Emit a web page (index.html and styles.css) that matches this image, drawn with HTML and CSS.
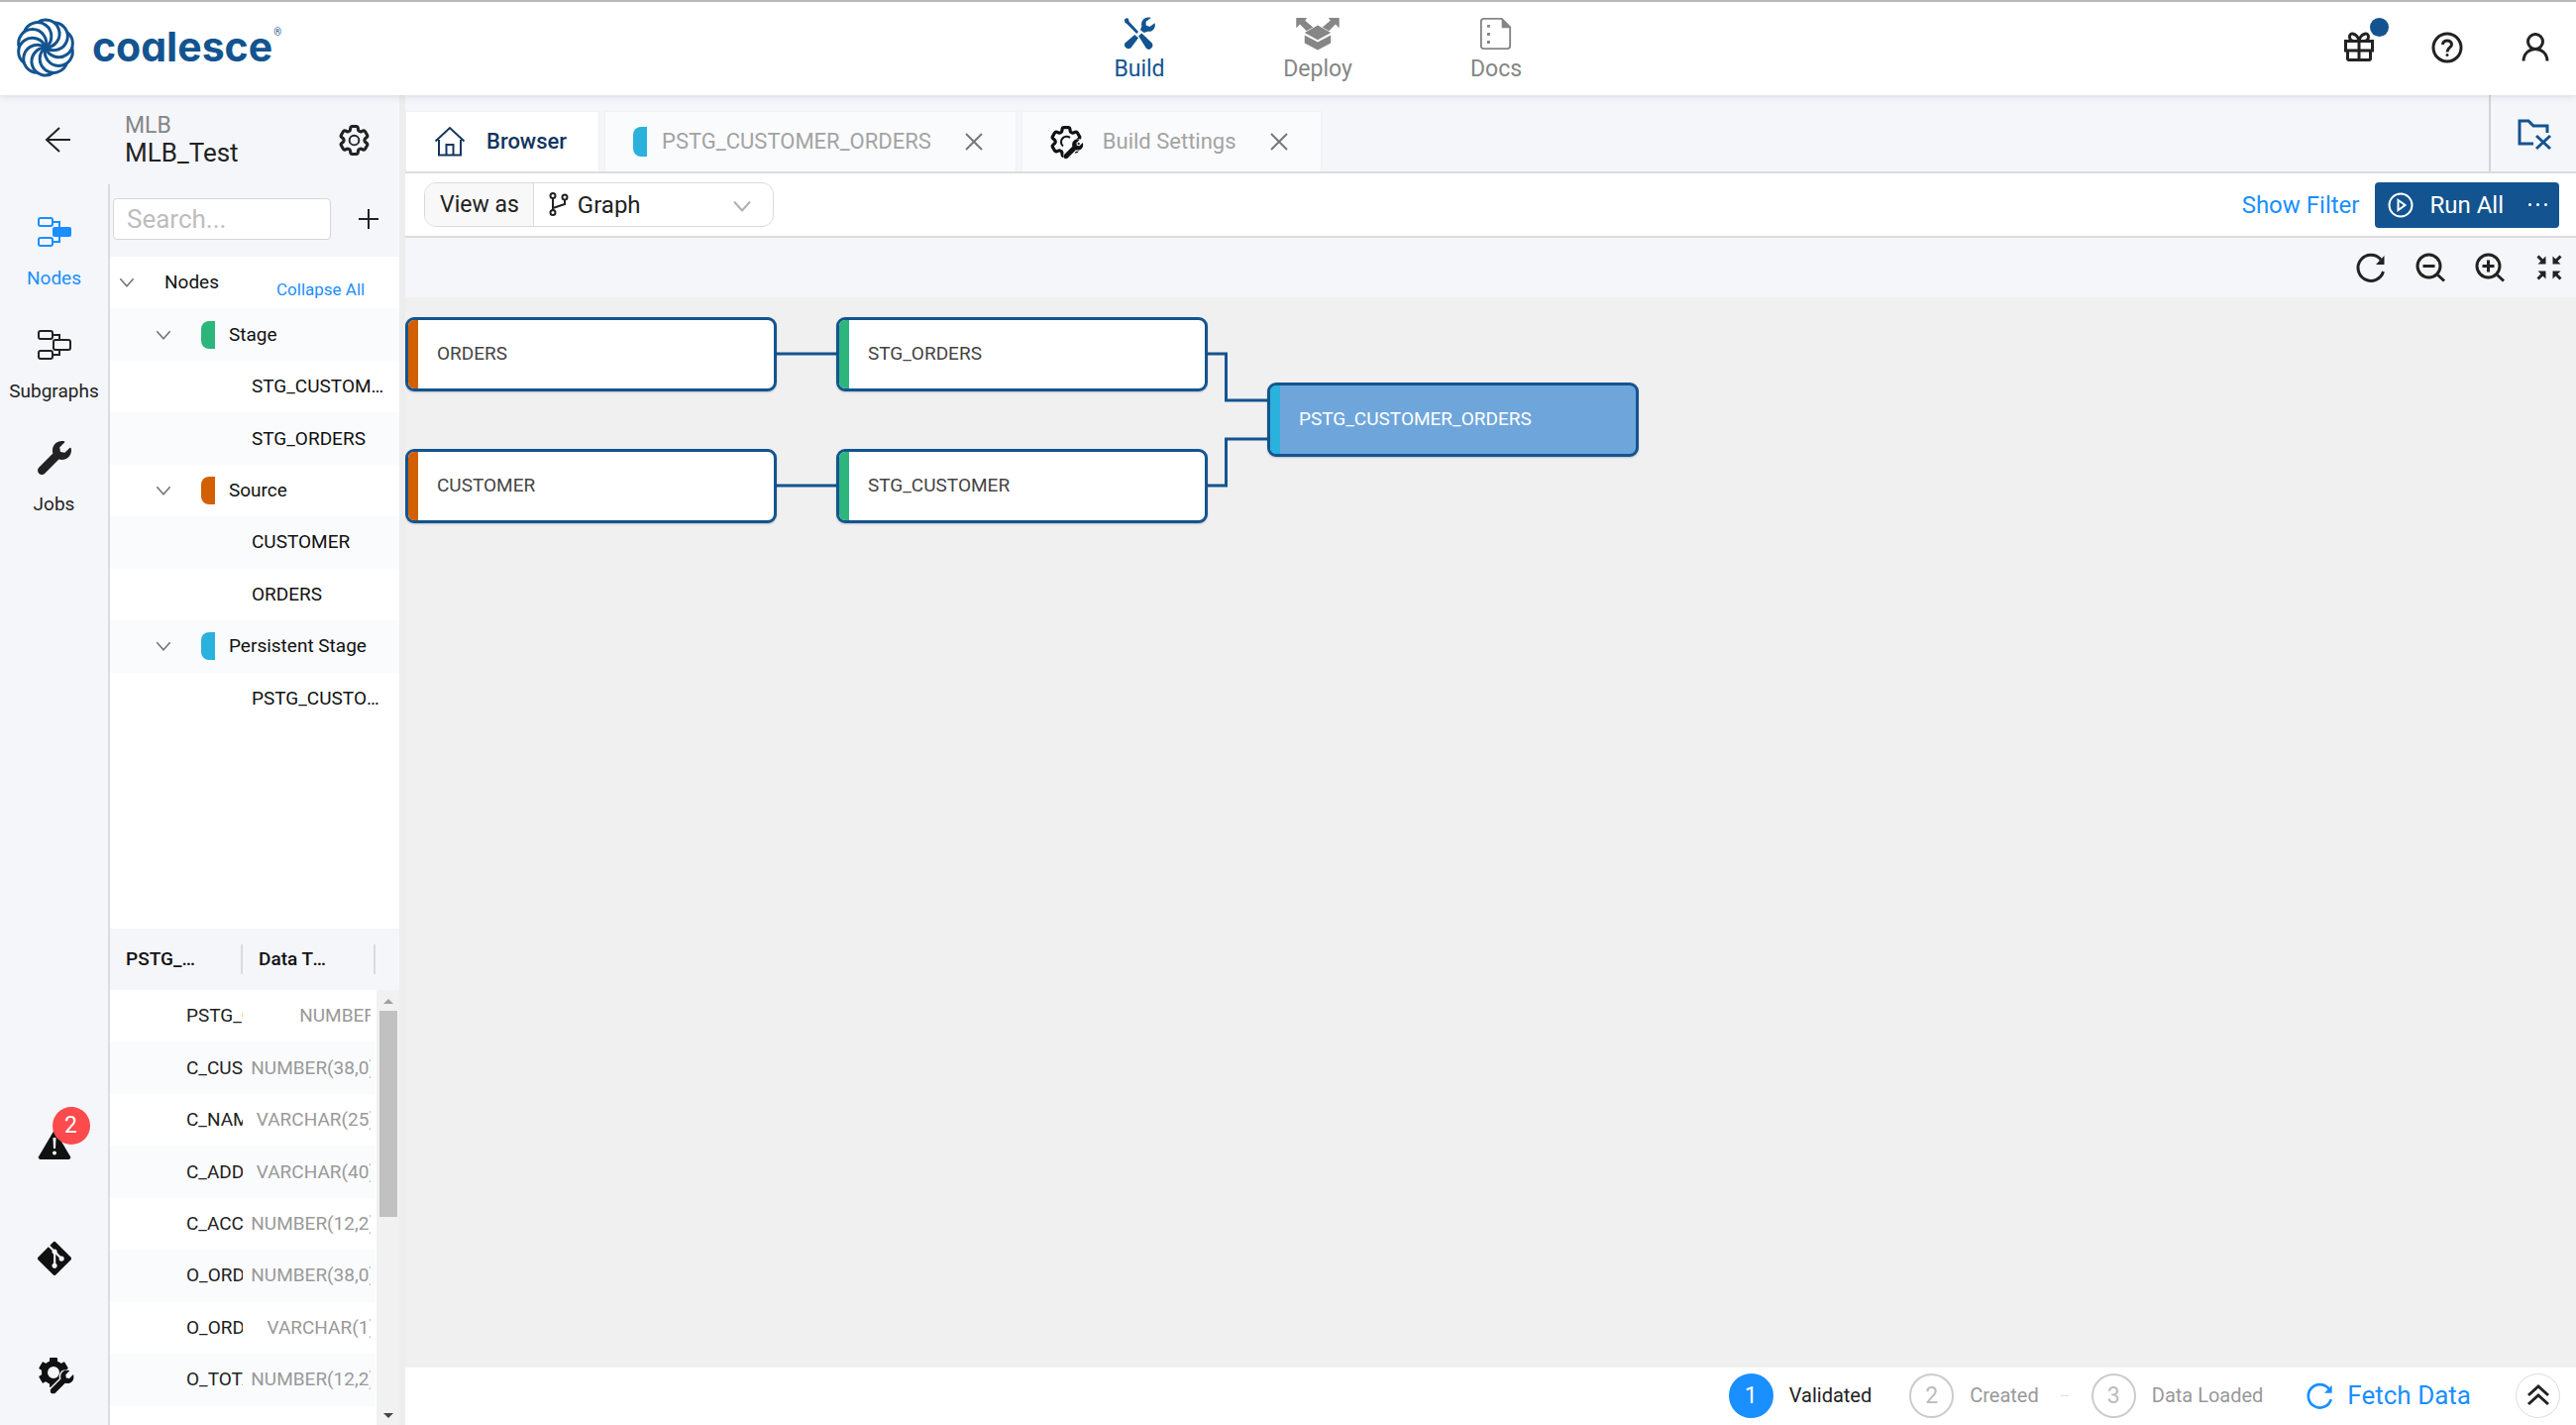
FILE: index.html
```html
<!DOCTYPE html>
<html lang="en">
<head>
<meta charset="utf-8">
<meta name="viewport" content="width=device-width, initial-scale=1">
<title>Coalesce - MLB_Test</title>
<link rel="stylesheet" href="styles.css">
</head>
<body>
<svg class="sprite" aria-hidden="true">
  <symbol id="chevron" viewBox="0 0 18 12"><path d="M1 1.500 9 10.500 17 1.500"/></symbol>
  <symbol id="close" viewBox="0 0 20 20"><path d="M2 2 18 18M18 2 2 18"/></symbol>
  <symbol id="gear" viewBox="2 2 20 20"><path d="M9.594 3.94c.09-.542.56-.94 1.11-.94h2.593c.55 0 1.02.398 1.11.94l.213 1.281c.063.374.313.686.645.87.074.04.147.083.22.127.325.196.72.257 1.075.124l1.217-.456a1.125 1.125 0 0 1 1.37.49l1.296 2.247a1.125 1.125 0 0 1-.26 1.431l-1.003.827c-.293.241-.438.613-.43.992a7.723 7.723 0 0 1 0 .255c-.008.378.137.75.43.991l1.004.827c.424.35.534.955.26 1.43l-1.298 2.247a1.125 1.125 0 0 1-1.369.491l-1.217-.456c-.355-.133-.75-.072-1.076.124a6.47 6.47 0 0 1-.22.128c-.331.183-.581.495-.644.869l-.213 1.281c-.09.543-.56.94-1.11.94h-2.594c-.55 0-1.019-.398-1.11-.94l-.213-1.281c-.062-.374-.312-.686-.644-.87a6.52 6.52 0 0 1-.22-.127c-.325-.196-.72-.257-1.076-.124l-1.217.456a1.125 1.125 0 0 1-1.369-.49l-1.297-2.247a1.125 1.125 0 0 1 .26-1.431l1.004-.827c.292-.24.437-.613.43-.991a6.932 6.932 0 0 1 0-.255c.007-.38-.138-.751-.43-.992l-1.004-.827a1.125 1.125 0 0 1-.26-1.43l1.297-2.247a1.125 1.125 0 0 1 1.37-.491l1.216.456c.356.133.751.072 1.076-.124.072-.044.146-.086.22-.128.332-.183.582-.495.644-.869l.214-1.28Z"/></symbol>
  <symbol id="wrench" viewBox="0 0 512 512"><path d="M507.73 109.1c-2.24-9.03-13.54-12.09-20.12-5.51l-74.36 74.36-67.88-11.31-11.31-67.88 74.36-74.36c6.62-6.62 3.43-17.9-5.66-20.16-47.38-11.74-99.55.91-136.58 37.93-39.64 39.64-50.55 97.1-34.05 147.2L18.74 402.76c-24.99 24.99-24.99 65.51 0 90.5 24.99 24.99 65.51 24.99 90.5 0l213.21-213.21c50.12 16.71 107.47 5.68 147.37-34.22 37.07-37.07 49.7-89.32 37.91-136.73z"/></symbol>
</svg>

<header class="topbar">
  <a class="brand" href="#" aria-label="Coalesce home">
    <svg class="brand-mark" viewBox="-30 -30 60 60" aria-hidden="true">
      <g class="line">
        <path d="M0 0A14 14 0 1 0 -8.2 -25.3"/>
        <path transform="rotate(36)" d="M0 0A14 14 0 1 0 -8.2 -25.3"/>
        <path transform="rotate(72)" d="M0 0A14 14 0 1 0 -8.2 -25.3"/>
        <path transform="rotate(108)" d="M0 0A14 14 0 1 0 -8.2 -25.3"/>
        <path transform="rotate(144)" d="M0 0A14 14 0 1 0 -8.2 -25.3"/>
        <path transform="rotate(180)" d="M0 0A14 14 0 1 0 -8.2 -25.3"/>
        <path transform="rotate(216)" d="M0 0A14 14 0 1 0 -8.2 -25.3"/>
        <path transform="rotate(252)" d="M0 0A14 14 0 1 0 -8.2 -25.3"/>
        <path transform="rotate(288)" d="M0 0A14 14 0 1 0 -8.2 -25.3"/>
        <path transform="rotate(324)" d="M0 0A14 14 0 1 0 -8.2 -25.3"/>
      </g>
    </svg>
    <span class="brand-name">coalesce</span><sup class="brand-reg">®</sup>
  </a>
  <nav class="main-nav" aria-label="Main">
    <a class="active" href="#build">
      <svg class="nav-icon" viewBox="0 0 36 36" aria-hidden="true">
        <path class="solid" d="M2 3 4.500 1 6.500 2.500 7 5 17 16 15 18 4.500 7.500 2.500 6z"/>
        <path class="solid" d="M17 20.500 20.500 17.500 31 27.500A4.300 4.300 0 0 1 25.500 34z"/>
        <path class="solid" d="M34.500 6.500 29 10.500 25 9 25 5 30.500 1C24 -1 19 4 20.500 10L19 14 23 17 27 15.500C32 16.500 36 11.500 34.500 6.500z"/>
        <path class="solid" d="M13 19 17 22.500 9 33A4.200 4.200 0 0 1 2.500 28z"/>
      </svg>Build</a>
    <a href="#deploy">
      <svg class="nav-icon wide" viewBox="0 0 46 36" aria-hidden="true">
        <path class="solid" d="M0 1H11.500L9.500 4 18 11 11 15 4 8 0 12zM46 1H34.500L36.500 4 28 11 35 15 42 8 46 12z"/>
        <path class="solid" d="M23 9 37 17 23 24.500 9 17zM9 19.500 23 27 37 19.500V28L23 35.500 9 28z"/>
      </svg>Deploy</a>
    <a href="#docs">
      <svg class="nav-icon" viewBox="0 0 36 36" aria-hidden="true">
        <path class="line" d="M5 2H24L33 11V31A3 3 0 0 1 30 34H5A3 3 0 0 1 2 31V5A3 3 0 0 1 5 2z"/>
        <path class="solid" d="M24 1 34 12H24zM8.500 8.500h3v3h-3zM8.500 17h3v3h-3zM8.500 25.500h3v3h-3z"/>
      </svg>Docs</a>
  </nav>
  <div class="top-actions">
    <button type="button" aria-label="What's new" class="has-dot">
      <svg viewBox="0 0 32 32" aria-hidden="true"><g class="line"><path d="M2.500 9.500h27v9.500h-27zM4.500 19V27a1.500 1.500 0 0 0 1.500 1.500h20a1.500 1.500 0 0 0 1.500-1.500V19M16 9.500V28.500M16 9C14 1 6 0 6.500 5.500 6.700 8 9 9.500 11 9.500M16 9C18 1 26 0 25.500 5.500 25.300 8 23 9.500 21 9.500"/></g></svg>
      <span class="dot"></span>
    </button>
    <button type="button" aria-label="Help">
      <svg viewBox="0 0 32 32" aria-hidden="true"><g class="line"><circle cx="16" cy="16" r="14"/><path d="M11.500 13C11.500 7.500 20.500 7.500 20.500 13 20.500 16 16 16 16 20.500"/></g><circle class="solid" cx="16" cy="23.500" r="1.500"/></svg>
    </button>
    <button type="button" aria-label="Account">
      <svg viewBox="0 0 32 32" aria-hidden="true"><g class="line"><circle cx="16" cy="10" r="7.500"/><path d="M4 29.500C4.500 13.500 27.500 13.500 28 29.500"/></g></svg>
    </button>
  </div>
</header>

<div class="workspace">
  <aside class="sidebar">
    <div class="side-head">
      <button class="back" type="button" aria-label="Back"><svg viewBox="0 0 26 26" aria-hidden="true"><path class="line" d="M26 13H2M15 1 2 13 15 25"/></svg></button>
      <div class="project">
        <span class="project-group">MLB</span>
        <h1>MLB_Test</h1>
      </div>
      <button class="settings" type="button" aria-label="Workspace settings"><svg viewBox="0 0 32 32" aria-hidden="true"><use class="line" href="#gear"/><circle class="line" cx="16" cy="16" r="5"/></svg></button>
    </div>

    <div class="side-body">
      <nav class="rail" aria-label="Workspace">
        <a class="active" href="#nodes">
          <svg viewBox="0 0 34 34" aria-hidden="true"><g class="line"><rect x="1" y="3" width="14" height="8" rx="2"/><rect x="1" y="23" width="14" height="8" rx="2"/><path d="M15 7h7v5M15 27h7v-5"/></g><rect class="solid" x="15" y="12" width="19" height="10" rx="2"/></svg>
          Nodes</a>
        <a href="#subgraphs">
          <svg viewBox="0 0 34 34" aria-hidden="true"><g class="line"><rect x="1" y="3" width="14" height="8" rx="2"/><rect x="1" y="23" width="14" height="8" rx="2"/><path d="M15 7h7v5M15 27h7v-5"/><rect x="16" y="12" width="17" height="10" rx="2"/></g></svg>
          Subgraphs</a>
        <a href="#jobs">
          <svg class="solid" viewBox="0 0 34 34" aria-hidden="true"><use href="#wrench"/></svg>
          Jobs</a>
        <div class="rail-tools">
          <button class="problems" type="button" aria-label="2 problems">
            <svg viewBox="0 0 34 34" aria-hidden="true"><path class="solid" d="M17 3 33.500 31 32 33H2L.5 31z"/><path class="mark" d="M15.500 11h3l-.5 11h-2z"/><circle class="mark" cx="17" cy="26.500" r="2"/></svg>
            <span class="count">2</span>
          </button>
          <button type="button" aria-label="Git"><svg class="solid" viewBox="0 32 448 448" aria-hidden="true"><path d="M439.550 236.050L244 40.450a28.870 28.870 0 0 0-40.810 0l-40.660 40.630 51.520 51.520c27.060-9.140 52.680 16.770 43.390 43.680l49.660 49.660c34.230-11.800 61.180 31 35.470 56.690-26.490 26.490-70.210-2.870-56-37.340L240.220 199v121.850c25.300 12.540 22.260 41.850 9.080 55a34.340 34.340 0 0 1-48.550 0c-17.570-17.600-11.070-46.910 11.250-56v-123c-20.800-8.510-24.600-30.740-18.640-45L142.570 101 8.450 235.140a28.860 28.860 0 0 0 0 40.810l195.610 195.600a28.860 28.860 0 0 0 40.800 0l194.690-194.690a28.860 28.860 0 0 0 0-40.810z"/></svg></button>
          <button type="button" aria-label="Build settings"><svg viewBox="0 0 34 34" aria-hidden="true"><circle class="gear-ring" cx="16" cy="16" r="9"/><g class="solid"><rect x="12" y="1" width="8" height="6" rx="1"/><rect x="12" y="1" width="8" height="6" rx="1" transform="rotate(60 16 16)"/><rect x="12" y="1" width="8" height="6" rx="1" transform="rotate(180 16 16)"/><rect x="12" y="1" width="8" height="6" rx="1" transform="rotate(240 16 16)"/><rect x="12" y="1" width="8" height="6" rx="1" transform="rotate(300 16 16)"/></g><svg class="halo" x="11" y="12" width="24" height="24" viewBox="-40 -40 592 592"><use href="#wrench"/></svg></svg></button>
        </div>
      </nav>

      <div class="panel">
        <form class="search">
          <input type="text" placeholder="Search..." aria-label="Search nodes">
          <button type="button" aria-label="Add node"><svg viewBox="0 0 22 22" aria-hidden="true"><path class="line" d="M11 1V21M1 11H21"/></svg></button>
        </form>

        <ul class="tree">
          <li class="root"><svg class="chev"><use href="#chevron"/></svg><span>Nodes</span><button type="button">Collapse All</button></li>
          <li class="group"><svg class="chev"><use href="#chevron"/></svg><i class="tag stage"></i><span>Stage</span></li>
          <li class="leaf"><span>STG_CUSTOMER</span></li>
          <li class="leaf"><span>STG_ORDERS</span></li>
          <li class="group"><svg class="chev"><use href="#chevron"/></svg><i class="tag source"></i><span>Source</span></li>
          <li class="leaf"><span>CUSTOMER</span></li>
          <li class="leaf"><span>ORDERS</span></li>
          <li class="group"><svg class="chev"><use href="#chevron"/></svg><i class="tag persistent"></i><span>Persistent Stage</span></li>
          <li class="leaf"><span>PSTG_CUSTOMER_ORDERS</span></li>
        </ul>

        <div class="columns">
          <div class="columns-view">
            <table>
              <thead>
                <tr><th scope="col"><span>PSTG_CUSTOMER_ORDERS</span></th><th scope="col"><span>Data Type</span></th></tr>
              </thead>
              <tbody>
                <tr><td><span>PSTG_CUSTOMER</span></td><td><span>NUMBER</span></td></tr>
                <tr><td><span>C_CUSTKEY</span></td><td><span>NUMBER(38,0)</span></td></tr>
                <tr><td><span>C_NAME</span></td><td><span>VARCHAR(25)</span></td></tr>
                <tr><td><span>C_ADDRESS</span></td><td><span>VARCHAR(40)</span></td></tr>
                <tr><td><span>C_ACCTBAL</span></td><td><span>NUMBER(12,2)</span></td></tr>
                <tr><td><span>O_ORDERKEY</span></td><td><span>NUMBER(38,0)</span></td></tr>
                <tr><td><span>O_ORDERSTATUS</span></td><td><span>VARCHAR(1)</span></td></tr>
                <tr><td><span>O_TOTALPRICE</span></td><td><span>NUMBER(12,2)</span></td></tr>
                <tr><td><span>O_ORDERDATE</span></td><td><span>DATE</span></td></tr>
              </tbody>
            </table>
            <div class="scrollbar" aria-hidden="true"><i class="up"></i><i class="thumb"></i><i class="down"></i></div>
          </div>
        </div>
      </div>
    </div>
  </aside>

  <main class="main">
    <div class="tabstrip">
      <div class="tab current">
        <svg class="tab-icon" viewBox="0 0 32 32" aria-hidden="true"><path class="line" d="M1.500 15.500 16 2 30.500 15.500M5 14V29.500H27V14M12.500 29V19H19.500V29"/></svg>
        <button type="button">Browser</button>
      </div>
      <div class="tab">
        <i class="tag persistent"></i>
        <button type="button">PSTG_CUSTOMER_ORDERS</button>
        <button class="close" type="button" aria-label="Close PSTG_CUSTOMER_ORDERS"><svg><use href="#close"/></svg></button>
      </div>
      <div class="tab">
        <svg class="tab-icon bold" viewBox="0 0 32 32" aria-hidden="true"><use class="line" href="#gear"/><path class="line" d="M20 12A5.500 5.500 0 1 0 13 20.500"/><svg class="halo" x="12" y="12" width="20" height="20" viewBox="-40 -40 592 592"><use href="#wrench"/></svg></svg>
        <button type="button">Build Settings</button>
        <button class="close" type="button" aria-label="Close Build Settings"><svg><use href="#close"/></svg></button>
      </div>
      <button class="close-all" type="button" aria-label="Close all tabs"><svg viewBox="0 0 34 32" aria-hidden="true"><path class="line" d="M16 26H2V3H11L16 8H30V15M19 18 33 31M33 18 19 31"/></svg></button>
    </div>

    <div class="toolbar">
      <div class="view-as">
        <label for="view">View as</label>
        <div class="view-select">
          <svg class="branch" viewBox="0 0 20 24" aria-hidden="true"><g class="line"><circle cx="4" cy="3.500" r="2.500"/><circle cx="4" cy="20.500" r="2.500"/><circle cx="16" cy="5" r="2.500"/><path d="M4 6V18M4 16 16 12V7.500"/></g></svg>
          <select id="view"><option>Graph</option><option>Grid</option></select>
          <svg class="chev"><use href="#chevron"/></svg>
        </div>
      </div>
      <div class="run">
        <button class="filter" type="button">Show Filter</button>
        <div class="run-group">
          <button type="button"><svg viewBox="0 0 26 26" aria-hidden="true"><g class="line"><circle cx="13" cy="13" r="11.500"/><path d="M10.500 8 17.500 13 10.500 18z"/></g></svg>Run All</button>
          <button class="more" type="button" aria-label="More run options"><i></i><i></i><i></i></button>
        </div>
      </div>
    </div>

    <div class="graph-tools">
      <button type="button" aria-label="Refresh graph"><svg viewBox="0 0 30 30"><g class="line"><path d="M25 7A13 13 0 1 0 27.500 19"/></g><path class="solid" d="M28.500 3V12H20z"/></svg></button>
      <button type="button" aria-label="Zoom out"><svg viewBox="0 0 30 30"><path class="line" d="M7.500 13.500h12M22.500 22.500 29 28.500"/><circle class="line" cx="13.500" cy="13.500" r="11.500"/></svg></button>
      <button type="button" aria-label="Zoom in"><svg viewBox="0 0 30 30"><path class="line" d="M7.500 13.500h12M13.500 7.500v12M22.500 22.500 29 28.500"/><circle class="line" cx="13.500" cy="13.500" r="11.500"/></svg></button>
      <button type="button" aria-label="Fit graph"><svg viewBox="0 0 30 30"><path class="line" d="M3.500 3.500 8 8M26.500 3.500 22 8M3.500 26.500 8 22M26.500 26.500 22 22"/><path class="solid" d="M11.500 3.500V11.500H3.500zM18.500 3.500V11.500H26.500zM11.500 26.500V18.500H3.500zM18.500 26.500V18.500H26.500z"/></svg></button>
    </div>

    <div class="canvas">
      <svg class="links" width="1250" height="240" aria-hidden="true">
        <path d="M374 57H436M374 190H436M809 57H828.500V104H871M809 190H828.500V143H871"/>
      </svg>
      <div class="node orders"><i class="source"></i>ORDERS</div>
      <div class="node customer"><i class="source"></i>CUSTOMER</div>
      <div class="node stg-orders"><i class="stage"></i>STG_ORDERS</div>
      <div class="node stg-customer"><i class="stage"></i>STG_CUSTOMER</div>
      <div class="node pstg selected"><i class="persistent"></i>PSTG_CUSTOMER_ORDERS</div>
    </div>

    <footer class="status">
      <ol class="steps">
        <li class="done"><b>1</b>Validated</li>
        <li><b>2</b>Created</li>
        <li class="joined"><b>3</b>Data Loaded</li>
      </ol>
      <button class="fetch" type="button"><svg viewBox="0 0 30 30" aria-hidden="true"><g class="line"><path d="M25 7A13 13 0 1 0 27.500 19"/></g><path class="solid" d="M28.500 3V12H20z"/></svg>Fetch Data</button>
      <button class="expand" type="button" aria-label="Expand panel"><svg viewBox="0 0 22 22" aria-hidden="true"><path class="line" d="M1 11 11 2 21 11M1 20 11 11 21 20"/></svg></button>
    </footer>
  </main>
</div>
</body>
</html>
```
FILE: styles.css
```css
* { box-sizing: border-box; }

:root {
  --navy: #135490;
  --blue: #1a8fff;
  --ink: #222;
  --muted: #868686;
  --pale: #f5f6fa;
  --stripe: #fafbfd;
  --rule: #dcdcde;
  --stage: #2db67c;
  --source: #d25f00;
  --persistent: #2ab1dc;
}

body {
  margin: 0;
  height: 100vh;
  display: flex;
  flex-direction: column;
  overflow: hidden;
  border-top: 2px solid #b9b9b9;
  background: #fff;
  color: var(--ink);
  font: 19px/24px Roboto, "Liberation Sans", sans-serif;
}

button, input, select { font: inherit; color: inherit; }
button { padding: 0; border: 0; background: none; cursor: pointer; }
a { color: inherit; text-decoration: none; }
svg { display: block; flex: none; overflow: visible; }
.sprite { position: absolute; width: 0; height: 0; }
.line { fill: none; stroke: currentColor; stroke-width: 2; }
.solid { fill: currentColor; }
.stage { background: var(--stage); }
.source { background: var(--source); }
.persistent { background: var(--persistent); }
.tag { flex: none; width: 14px; height: 28px; border-radius: 8px 0 0 8px; }
.chev { width: 16px; height: 10px; fill: none; stroke: #777; stroke-width: 2; }

/* Top bar */
.topbar {
  flex: none;
  height: 94px;
  display: grid;
  grid-template-columns: 1fr auto 1fr;
  position: relative;
  box-shadow: 0 1px 8px rgba(0, 20, 60, .12);
}
.brand { display: flex; align-items: center; padding: 0 0 2px 16px; color: var(--navy); }
.brand-mark { width: 60px; height: 60px; }
.brand-mark .line { stroke-width: 3; }
.brand-name { margin-left: 17px; padding-bottom: 2px; font: 700 41px/50px Inter, Roboto, sans-serif; font-feature-settings: "cv11"; }
.brand-reg { align-self: flex-start; margin: 21px 0 0 1px; font-size: 10px; line-height: 20px; }
.main-nav { display: flex; padding-left: 60px; font-size: 23px; color: var(--muted); }
.main-nav a { width: 180px; display: flex; flex-direction: column; align-items: center; gap: 5px; padding-top: 15px; line-height: 28px; }
.main-nav .active { color: var(--navy); }
.nav-icon { width: 34px; height: 34px; }
.nav-icon.wide { width: 46px; }
.top-actions { display: flex; justify-content: flex-end; align-items: center; gap: 57px; padding: 0 25px 2px 0; }
.top-actions svg { width: 32px; height: 32px; }
.top-actions .line { stroke-width: 3; }
.has-dot { position: relative; }
.dot { position: absolute; left: 27px; top: -14px; width: 19px; height: 19px; border-radius: 50%; background: var(--navy); }

.workspace { flex: 1; min-height: 0; display: flex; }

/* Sidebar */
.sidebar {
  flex: none;
  width: 409px;
  display: flex;
  flex-direction: column;
  background: var(--pale);
  border-right: 6px solid #ededed;
}
.side-head { flex: none; height: 90px; display: flex; align-items: center; padding: 0 30px 0 45px; }
.back svg { width: 26px; height: 26px; }
.project { flex: 1; margin-left: 55px; }
.project-group { display: block; font-size: 23px; line-height: 26px; color: var(--muted); }
.project h1 { margin: 0; font-size: 26px; line-height: 28px; font-weight: 400; }
.settings svg { width: 31px; height: 31px; }
.side-body { flex: 1; min-height: 0; display: flex; }

.rail { flex: none; width: 111px; display: flex; flex-direction: column; border-right: 2px solid var(--rule); }
.rail a { height: 114px; display: flex; flex-direction: column; align-items: center; gap: 18px; padding-top: 31px; }
.rail a > svg, .rail button > svg { width: 34px; height: 34px; }
.rail .active { color: var(--blue); }
.rail-tools { margin-top: auto; display: flex; flex-direction: column; align-items: center; gap: 82px; padding-bottom: 35px; color: #111; }
.problems { position: relative; }
.problems .mark { fill: var(--pale); }
.count { position: absolute; left: 15px; top: -20px; width: 38px; height: 38px; border-radius: 50%; background: #fd4a4c; color: #fff; font-size: 23px; line-height: 38px; }
.gear-ring { fill: none; stroke: currentColor; stroke-width: 6; }
.halo { fill: currentColor; stroke: var(--pale); stroke-width: 60; paint-order: stroke; }

.panel { flex: 1; min-width: 0; display: flex; flex-direction: column; background: #fff; }
.search { flex: none; height: 73px; display: flex; gap: 27px; padding: 14px 0 17px 3px; background: var(--pale); }
.search input { width: 220px; padding: 0 13px; border: 1px solid #d6d6d6; border-radius: 4px; background: #fff; font-size: 26px; }
.search input::placeholder { color: #bdbdbd; opacity: 1; }
.search svg { width: 22px; height: 22px; }

.tree { flex: none; height: 472px; display: grid; grid-auto-rows: 1fr; margin: 0; padding: 0; list-style: none; color: #111; }
.tree li { display: flex; align-items: center; min-width: 0; }
.tree li:nth-child(even) { background: var(--stripe); }
.tree .root { padding-left: 9px; }
.root span { margin-left: 30px; }
.root button { margin: 14px 0 0 58px; font-size: 17px; line-height: 20px; color: var(--blue); }
.group { padding-left: 46px; }
.group .tag { margin: 0 14px 0 30px; }
.leaf { padding: 0 15px 0 143px; }
.leaf span { overflow: hidden; text-overflow: ellipsis; white-space: nowrap; }

.columns { flex: 1; min-height: 0; display: flex; flex-direction: column; justify-content: flex-end; overflow: hidden; }
.columns-view { height: 501px; flex: none; position: relative; overflow: hidden; }
.columns table { width: 268px; height: 534px; table-layout: fixed; border-collapse: separate; border-spacing: 0; }
.columns thead tr { height: 62px; background: var(--pale); box-shadow: 24px 0 0 var(--pale); }
.columns th { height: 62px; padding: 0; font-weight: 500; text-align: left; color: #111; }
.columns th span { display: block; height: 30px; line-height: 30px; padding: 0 45px 0 16px; border-right: 2px solid #dadbe0; overflow: hidden; text-overflow: ellipsis; white-space: nowrap; }
.columns tbody tr:nth-child(even) { background: var(--stripe); }
.columns td { padding: 0; overflow: hidden; white-space: nowrap; line-height: 22px; }
.columns td:first-child { padding-left: 77px; }
.columns td:last-child { border-right: 5px solid transparent; color: #999; }
.columns td span { display: block; overflow: hidden; }
.columns td:last-child span { margin-right: -5px; text-align: right; }
.scrollbar { position: absolute; right: 0; top: 62px; bottom: 0; width: 23px; display: flex; flex-direction: column; align-items: center; background: #f1f1f1; }
.scrollbar i { width: 0; border: 5px solid transparent; }
.scrollbar .up { margin-top: 4px; border-bottom-color: #a0a0a0; }
.scrollbar .thumb { width: 18px; height: 208px; margin-top: 7px; border: 0; background: #c1c1c1; }
.scrollbar .down { margin: auto 0 2px; border-top-color: #444; }

/* Main area */
.main { flex: 1; min-width: 0; display: flex; flex-direction: column; background: var(--pale); }
.tabstrip { flex: none; height: 79px; display: flex; align-items: flex-end; gap: 5px; border-bottom: 2px solid var(--rule); font-size: 22px; color: #a3a3a3; }
.tab { height: 61px; display: flex; align-items: center; padding: 0 32px 0 28px; background: var(--stripe); border: 1px solid #f0f1f4; border-bottom: 0; }
.tab.current { background: #fff; color: #12365f; font-weight: 500; }
.tab-icon { width: 32px; height: 32px; margin-right: 21px; }
.tab-icon.bold { color: #111; }
.tab .tag { height: 30px; margin-right: 15px; }
.tab .close { margin-left: 33px; }
.tab .close svg { width: 20px; height: 20px; fill: none; stroke: #777; stroke-width: 2; }
.close-all { align-self: stretch; width: 88px; margin-left: auto; padding-left: 27px; border-left: 2px solid #d4d4d8; color: var(--navy); }
.close-all svg { width: 34px; height: 32px; }
.close-all .line { stroke-width: 3; }

.toolbar { flex: none; height: 65px; display: flex; align-items: center; justify-content: space-between; padding: 0 17px 0 19px; background: #fff; border-bottom: 2px solid var(--rule); }
.view-as { display: flex; height: 45px; border: 1px solid #dadada; border-radius: 12px; background: #fff; overflow: hidden; }
.view-as label { padding: 0 14px 0 15px; background: #f8f8f8; border-right: 1px solid #dadada; font-size: 23px; line-height: 43px; }
.view-select { position: relative; width: 241px; }
.view-select select { appearance: none; width: 100%; height: 100%; padding: 0 44px; border: 0; background: transparent; font-size: 24px; }
.branch { position: absolute; left: 15px; top: 9px; width: 20px; height: 24px; }
.view-select .chev { position: absolute; right: 22px; top: 17px; width: 18px; height: 12px; stroke: #b0b0b0; }
.run { display: flex; align-items: center; gap: 16px; font-size: 24px; }
.filter { color: var(--blue); }
.run-group { display: flex; height: 46px; border-radius: 4px; background: var(--navy); color: #fff; }
.run-group button { display: flex; align-items: center; gap: 16px; padding-left: 13px; }
.run-group svg { width: 26px; height: 26px; }
.run-group .more { gap: 5px; padding: 0 12px 0 25px; }
.more i { width: 3px; height: 3px; border-radius: 50%; background: #fff; }

.graph-tools { flex: none; height: 60px; display: flex; align-items: center; justify-content: flex-end; gap: 30px; padding-right: 12px; }
.graph-tools svg { width: 30px; height: 30px; }
.graph-tools .line { stroke-width: 3; }

.canvas { flex: 1; min-height: 0; position: relative; background: #f0f0f0; overflow: hidden; }
.links { position: absolute; left: 0; top: 0; fill: none; stroke: var(--navy); stroke-width: 3; }
.node { position: absolute; width: 375px; height: 75px; padding-left: 29px; border: 3px solid var(--navy); border-radius: 9px; background: #fff; color: #444; line-height: 68px; overflow: hidden; box-shadow: 0 1px 2px rgba(0, 0, 0, .2); }
.node i { position: absolute; left: 0; top: 0; bottom: 0; width: 10px; }
.orders { left: 0; top: 20px; }
.customer { left: 0; top: 153px; }
.stg-orders { left: 435px; top: 20px; }
.stg-customer { left: 435px; top: 153px; }
.pstg { left: 870px; top: 86px; }
.selected { background: #6ea6dc; color: #fff; }

/* Bottom status bar */
.status { flex: none; height: 58px; display: flex; align-items: center; justify-content: flex-end; padding: 0 16px 2px 0; background: #fff; }
.steps { display: flex; gap: 38px; margin: 0; padding: 0; list-style: none; font-size: 20px; color: #999; }
.steps li { display: flex; align-items: center; gap: 16px; }
.steps b { width: 45px; height: 45px; border: 2px solid #ccc; border-radius: 50%; font-size: 23px; font-weight: 400; line-height: 42px; text-align: center; color: #bbb; }
.steps .done { color: var(--ink); }
.done b { border-color: var(--blue); background: var(--blue); color: #fff; }
.joined::before { content: ""; width: 8px; height: 1px; margin: 0 7px 0 -16px; background: #ddd; }
.fetch { display: flex; align-items: center; gap: 14px; margin-left: 44px; font-size: 26px; color: var(--blue); }
.fetch svg { width: 27px; height: 27px; }
.fetch .line { stroke-width: 3; }
.expand { width: 45px; height: 45px; display: grid; place-items: center; margin-left: 45px; border: 1px solid #ddd; border-radius: 50%; }
.expand svg { width: 22px; height: 22px; }
.expand .line { stroke-width: 3; }
```
